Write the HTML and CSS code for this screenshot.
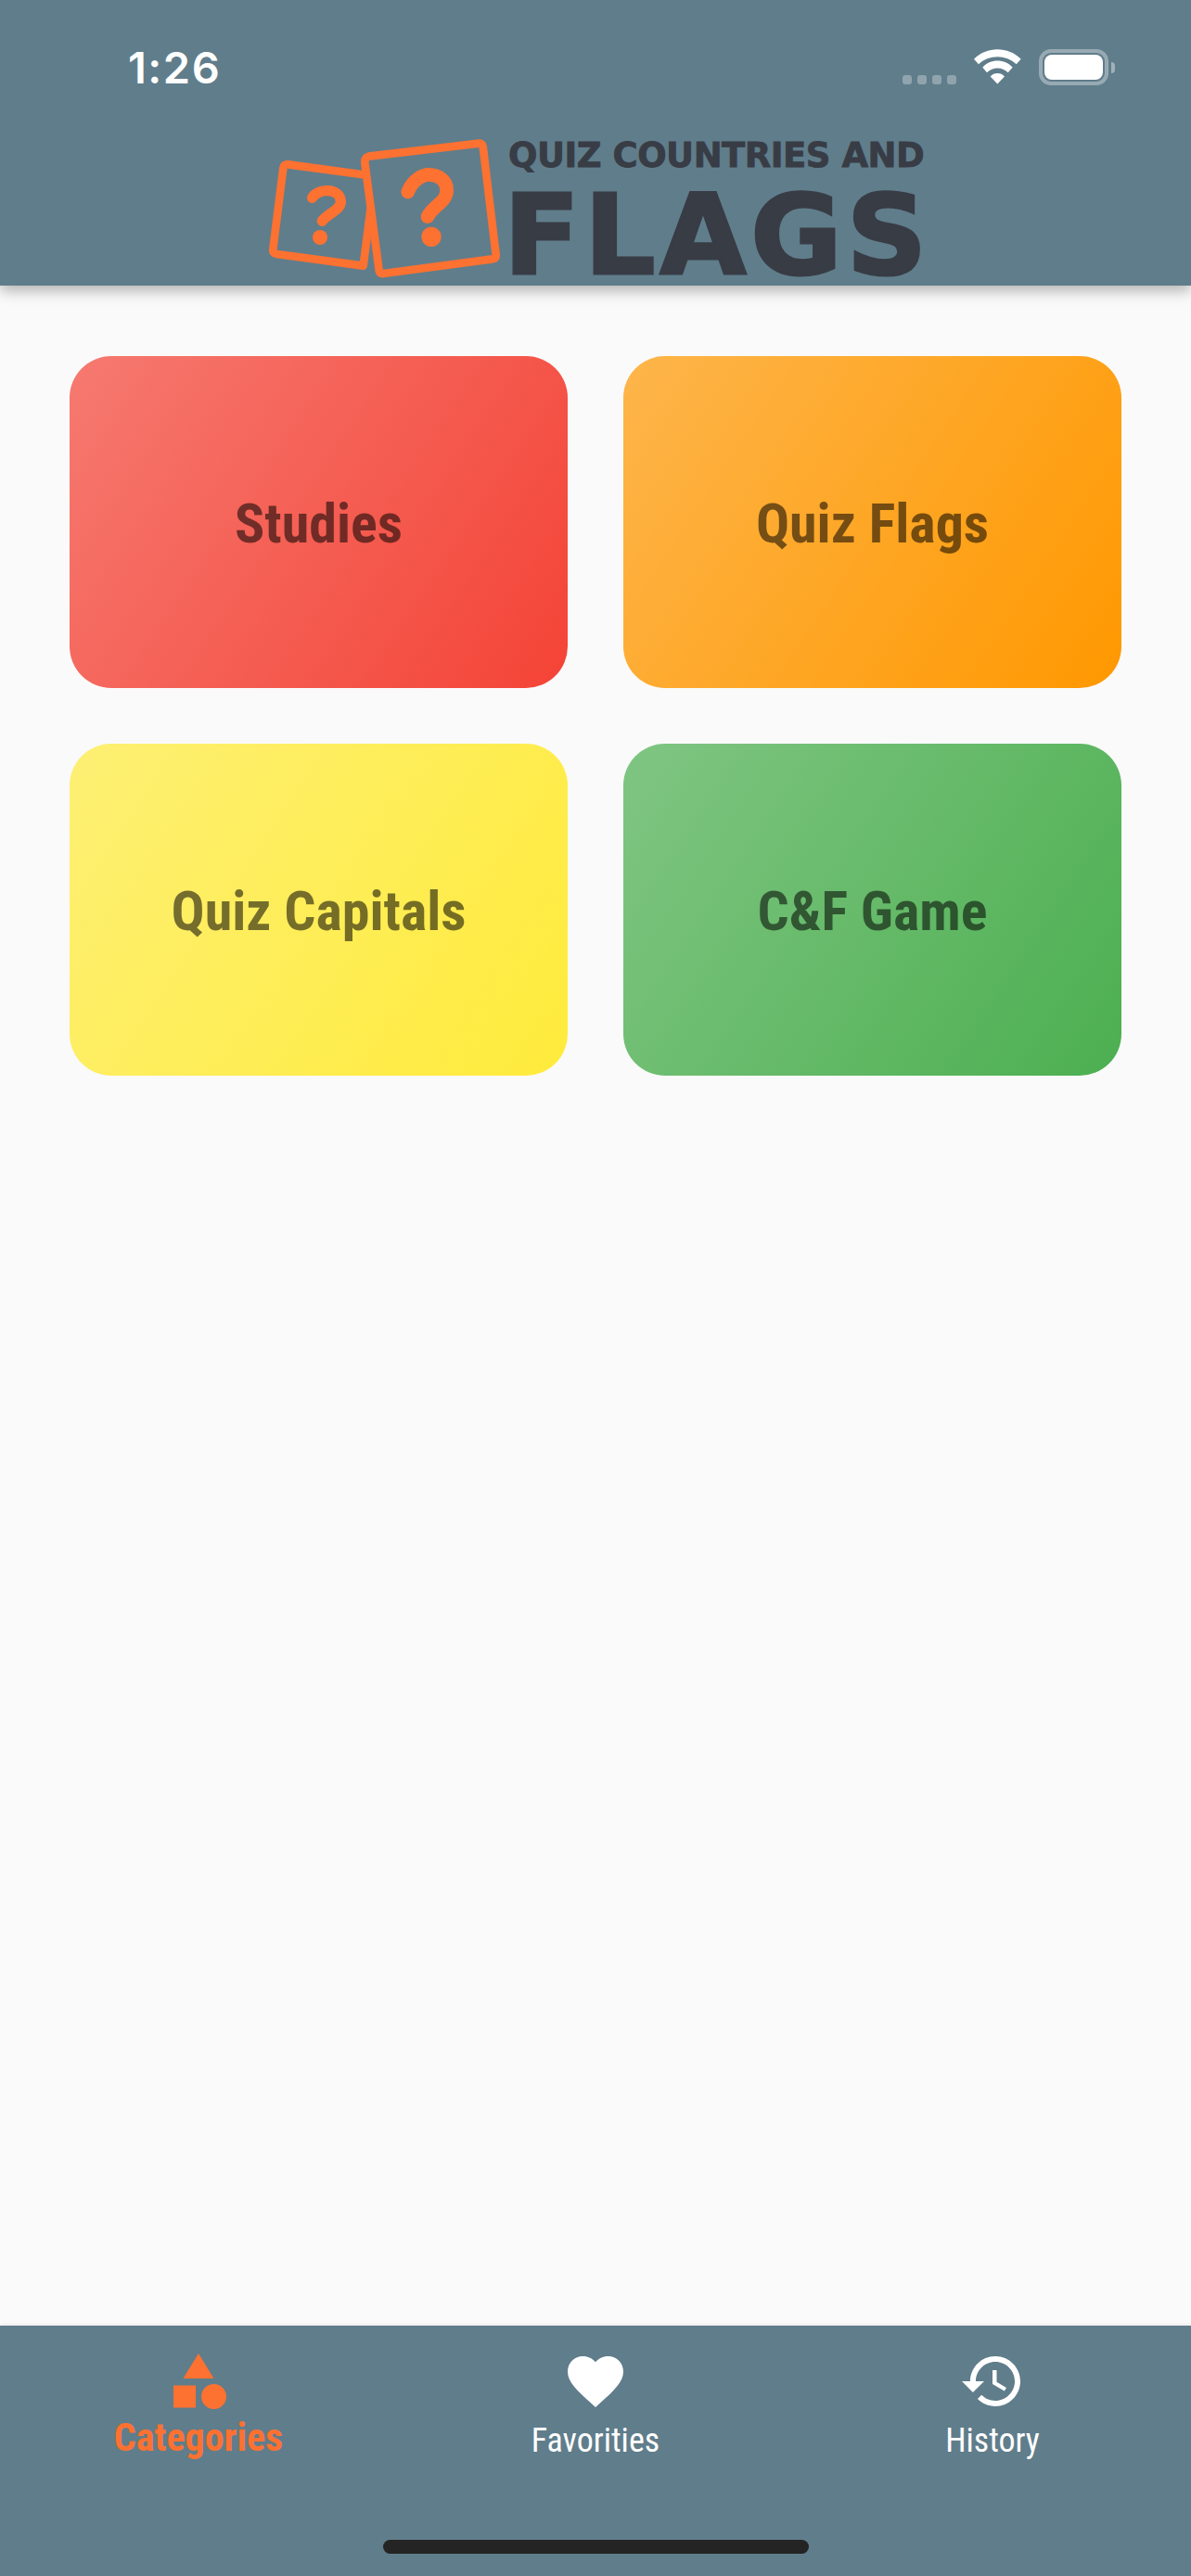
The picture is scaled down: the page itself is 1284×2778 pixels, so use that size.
FILE: index.html
```html
<!DOCTYPE html>
<html lang="en">
<head>
    <meta charset="UTF-8">
    <title>Quiz Countries and Flags</title>
    <link rel="stylesheet" href="styles.css">
</head>
<body>
    <div class="page">
        <header class="header">
            <div class="status">
                <span class="time">1:26</span>
                <div class="status-icons">
                    <div class="signal"><i></i><i></i><i></i><i></i></div>
                    <svg class="wifi" viewBox="300 72 153 113">
                        <path d="M300 104C340 62 412 62 452 104L437 120C405 88 347 88 315 120Z"/>
                        <path d="M328 131C352 102 400 102 425 131L410 147C392 128 360 128 342 147Z"/>
                        <path d="M353 160C365 146 387 146 399 160L376 184Z"/>
                    </svg>
                    <div class="battery-wrap">
                        <div class="battery"><div class="battery-fill"></div></div>
                        <div class="battery-cap"></div>
                    </div>
                </div>
            </div>
            <div class="logo">
                <svg class="logo-mark" viewBox="45 57 780 456">
                    <path class="card-line" d="M122 142L402 180L365 470L85 432Q71 430 73 416L106 154Q108 140 122 142Z"/>
                    <path class="mark-line" d="M200 250C215 220 290 215 292 262C293 290 250 300 232 325"/>
                    <circle class="mark-dot" cx="225" cy="378" r="24"/>
                    <path class="card-line card-top" d="M388 115L738 74Q750 72 752 84L794 434Q795 446 783 448L430 495Q418 497 416 485L370 137Q368 117 388 115Z"/>
                    <path class="mark-line mark-big" d="M509 231C525 190 560 175 575 175C610 175 635 195 635 225C635 265 590 275 573 311"/>
                    <circle class="mark-dot" cx="585" cy="376" r="32"/>
                </svg>
                <div class="logo-text">
                    <div class="logo-small">QUIZ COUNTRIES AND</div>
                    <div class="logo-big">FLAGS</div>
                </div>
            </div>
        </header>

        <main class="main">
            <div class="grid">
                <a class="tile tile-red">Studies</a>
                <a class="tile tile-orange">Quiz Flags</a>
                <a class="tile tile-yellow">Quiz Capitals</a>
                <a class="tile tile-green">C&amp;F Game</a>
            </div>
        </main>

        <nav class="nav">
            <div class="tabs">
                <div class="tab tab-active">
                    <svg class="tab-icon" viewBox="0 0 24 24">
                        <path d="M12 2l-5.5 9h11z"/>
                        <circle cx="17.5" cy="17.5" r="4.5"/>
                        <path d="M3 13.5h8v8H3z"/>
                    </svg>
                    <span class="tab-label">Categories</span>
                </div>
                <div class="tab">
                    <svg class="tab-icon" viewBox="0 0 24 24">
                        <path d="M12 21.35l-1.45-1.32C5.4 15.36 2 12.28 2 8.5 2 5.42 4.42 3 7.5 3c1.74 0 3.41.81 4.5 2.09C13.09 3.81 14.76 3 16.5 3 19.58 3 22 5.42 22 8.5c0 3.78-3.4 6.86-8.55 11.54L12 21.35z"/>
                    </svg>
                    <span class="tab-label">Favorities</span>
                </div>
                <div class="tab">
                    <svg class="tab-icon" viewBox="0 0 24 24">
                        <path d="M13 3c-4.97 0-9 4.03-9 9H1l3.89 3.89.07.14L9 12H6c0-3.87 3.13-7 7-7s7 3.13 7 7-3.13 7-7 7c-1.93 0-3.68-.79-4.94-2.06l-1.42 1.42C8.27 19.99 10.51 21 13 21c4.97 0 9-4.03 9-9s-4.03-9-9-9zm-1 5v5l4.28 2.54.72-1.21-3.5-2.08V8H12z"/>
                    </svg>
                    <span class="tab-label">History</span>
                </div>
            </div>
            <div class="home-bar"></div>
        </nav>
    </div>
</body>
</html>
```

FILE: styles.css
```css
body
{
    margin: 0;
    background-color: #fafafa;
    font-family: "Roboto", sans-serif;
}

.page
{
    display: flex;
    flex-direction: column;
    height: 2778px;
    overflow: hidden;
}

/* header */

.header
{
    position: relative;
    z-index: 1;
    height: 308px;
    box-sizing: border-box;
    padding-top: 53px;
    background-color: #607d8b;
    box-shadow: 0 6px 14px rgba(0, 0, 0, 0.28);
}

.status
{
    display: flex;
    justify-content: space-between;
    align-items: center;
    height: 39px;
    padding: 0 82px 0 138px;
}

.time
{
    font-family: "Inter", sans-serif;
    font-size: 47px;
    font-weight: 600;
    line-height: 39px;
    letter-spacing: 1.5px;
    color: #fff;
}

.status-icons
{
    display: flex;
    align-items: flex-end;
    gap: 19px;
}

.signal
{
    display: flex;
    gap: 6px;
    margin-bottom: 1px;
}

.signal i
{
    width: 10px;
    height: 10px;
    border-radius: 3px;
    background-color: rgba(255, 255, 255, 0.3);
}

.wifi
{
    display: block;
    width: 51px;
    height: 38px;
    margin-bottom: 1px;
    fill: #fff;
}

.battery-wrap
{
    display: flex;
    align-items: center;
    gap: 3px;
}

.battery
{
    width: 75px;
    height: 39px;
    box-sizing: border-box;
    padding: 2px;
    border: 4px solid rgba(255, 255, 255, 0.35);
    border-radius: 13px;
}

.battery-fill
{
    height: 100%;
    border-radius: 8px;
    background-color: #fff;
}

.battery-cap
{
    width: 4px;
    height: 12px;
    border-radius: 0 4px 4px 0;
    background-color: rgba(255, 255, 255, 0.4);
}

/* logo */

.logo
{
    display: flex;
    justify-content: center;
    align-items: flex-start;
    gap: 5px;
    margin-top: 57px;
    padding-right: 5px;
}

.logo-mark
{
    display: block;
    width: 260px;
    height: 152px;
}

.card-line
{
    fill: none;
    stroke: #fd7131;
    stroke-width: 26;
    stroke-linejoin: round;
}

.card-top
{
    fill: #607d8b;
}

.mark-line
{
    fill: none;
    stroke: #fd7131;
    stroke-width: 34;
    stroke-linecap: round;
}

.mark-big
{
    stroke-width: 44;
}

.mark-dot
{
    fill: #fd7131;
}

.logo-text
{
    width: 444px;
    padding-top: 5px;
    font-family: "DejaVu Sans", sans-serif;
    font-weight: 700;
    color: #383c45;
    white-space: nowrap;
}

.logo-small
{
    margin-left: -2px;
    font-size: 37px;
    line-height: 27px;
    letter-spacing: -0.5px;
    -webkit-text-stroke: 0.8px #383c45;
}

.logo-big
{
    margin-top: 28px;
    margin-left: -7px;
    font-size: 120px;
    line-height: 90px;
    letter-spacing: 5px;
    -webkit-text-stroke: 3px #383c45;
}

/* tiles */

.main
{
    flex: 1;
    padding: 76px 75px 0;
}

.grid
{
    display: grid;
    grid-template-columns: 1fr 1fr;
    grid-auto-rows: 358px;
    gap: 60px;
}

.tile
{
    display: flex;
    justify-content: center;
    align-items: center;
    padding-top: 2px;
    border-radius: 45px;
    font-size: 60px;
    font-weight: 700;
    font-stretch: 75%;
    color: rgba(0, 0, 0, 0.54);
}

.tile-red
{
    background: linear-gradient(123.7deg, rgba(244, 67, 54, 0.7), #f44336);
}

.tile-orange
{
    background: linear-gradient(123.7deg, rgba(255, 152, 0, 0.7), #ff9800);
}

.tile-yellow
{
    background: linear-gradient(123.7deg, rgba(255, 235, 59, 0.7), #ffeb3b);
}

.tile-green
{
    background: linear-gradient(123.7deg, rgba(76, 175, 80, 0.7), #4caf50);
}

/* bottom nav */

.nav
{
    display: flex;
    flex-direction: column;
    align-items: center;
    height: 270px;
    box-sizing: border-box;
    padding: 24px 0;
    background-color: #607d8b;
    box-shadow: 0 -1px 3px rgba(0, 0, 0, 0.08);
}

.tabs
{
    display: grid;
    grid-template-columns: repeat(3, 1fr);
    width: 100%;
}

.tab
{
    display: flex;
    flex-direction: column;
    align-items: center;
    color: #fff;
    fill: #fff;
}

.tab-icon
{
    display: block;
    width: 72px;
    height: 72px;
}

.tab-label
{
    margin-top: 7px;
    font-size: 36px;
    font-stretch: 75%;
    line-height: 42px;
}

.tab-active
{
    color: #fd7131;
    fill: #fd7131;
}

.tab-active .tab-label
{
    margin-top: 4px;
    font-size: 42px;
    font-weight: 700;
}

.home-bar
{
    width: 459px;
    height: 15px;
    margin-top: auto;
    border-radius: 8px;
    background-color: #242424;
}
```
